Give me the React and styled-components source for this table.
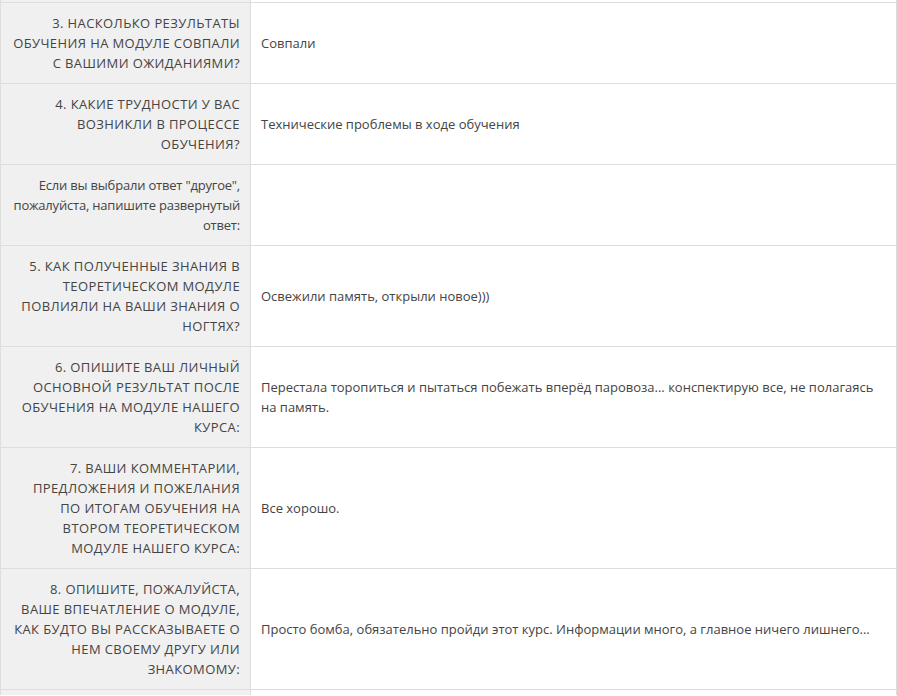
import React from 'react';
import styled, { createGlobalStyle } from 'styled-components';

const GlobalStyle = createGlobalStyle`
    html, body {
        margin: 0;
        padding: 0;
        background: #ffffff;
    }
    body {
        font-family: 'Open Sans', 'Liberation Sans', sans-serif;
    }
`;

const Table = styled.table`
    width: 897px;
    border-collapse: collapse;
    table-layout: fixed;
    font-size: 13px;
    line-height: 20px;
    color: #444444;
`;

const QuestionCol = styled.col`
    width: 250px;
`;

const Row = styled.tr`
    height: ${props => props.height ? `${props.height}px` : 'auto'};
`;

const Question = styled.th`
    box-sizing: border-box;
    padding: ${props => props.edge ? '0 10px' : '10px'};
    background: #f0f0f0;
    border: 1px solid #dddddd;
    border-top-width: ${props => props.edge === 'top' ? '0' : '1px'};
    border-bottom-width: ${props => props.edge === 'bottom' ? '0' : '1px'};
    text-align: right;
    vertical-align: middle;
    font-weight: 400;
    letter-spacing: ${props => props.plain ? '-0.2px' : '0.4px'};
    text-transform: ${props => props.plain ? 'none' : 'uppercase'};
`;

const Answer = styled.td`
    padding: ${props => props.edge ? '0 10px' : '10px'};
    border: 1px solid #dddddd;
    border-top-width: ${props => props.edge === 'top' ? '0' : '1px'};
    border-bottom-width: ${props => props.edge === 'bottom' ? '0' : '1px'};
    text-align: left;
    vertical-align: middle;
`;

const rows = [
    {
        question: '3. Насколько результаты обучения на модуле совпали с вашими ожиданиями?',
        answer: 'Совпали',
    },
    {
        question: '4. Какие трудности у вас возникли в процессе обучения?',
        answer: 'Технические проблемы в ходе обучения',
    },
    {
        question: 'Если вы выбрали ответ "другое", пожалуйста, напишите развернутый ответ:',
        answer: '',
        plain: true,
    },
    {
        question: '5. Как полученные знания в теоретическом модуле повлияли на ваши знания о ногтях?',
        answer: 'Освежили память, открыли новое)))',
    },
    {
        question: '6. Опишите ваш личный основной результат после обучения на модуле нашего курса:',
        answer: 'Перестала торопиться и пытаться побежать вперёд паровоза... конспектирую все, не полагаясь на память.',
    },
    {
        question: '7. Ваши комментарии, предложения и пожелания по итогам обучения на втором теоретическом модуле нашего курса:',
        answer: 'Все хорошо.',
    },
    {
        question: '8. Опишите, пожалуйста, ваше впечатление о модуле, как будто вы рассказываете о нем своему другу или знакомому:',
        answer: 'Просто бомба, обязательно пройди этот курс. Информации много, а главное ничего лишнего...',
    },
];

const App = () => {
    return <>
        <GlobalStyle />
        <Table>
            <colgroup>
                <QuestionCol />
                <col />
            </colgroup>
            <tbody>
                <Row height={2}>
                    <Question edge='top' />
                    <Answer edge='top' />
                </Row>
                {rows.map((item, index) => {
                    return <Row key={`survey-row-${index}`}>
                        <Question plain={item.plain}>{item.question}</Question>
                        <Answer>{item.answer}</Answer>
                    </Row>
                })}
                <Row height={6}>
                    <Question edge='bottom' />
                    <Answer edge='bottom' />
                </Row>
            </tbody>
        </Table>
    </>
};

export default App;
